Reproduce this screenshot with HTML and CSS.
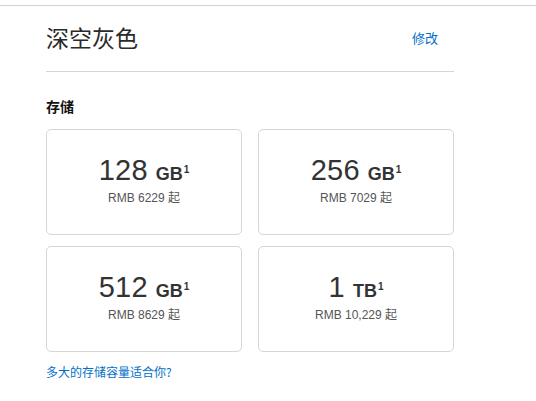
FILE: index.html
```html
<!DOCTYPE html>
<html lang="zh-CN">
<head>
<meta charset="utf-8">
<link rel="stylesheet" href="styles.css">
</head>
<body>
<div class="topbar"></div>
<main class="panel">
  <div class="color-row">
    <h1 class="color-name">深空灰色</h1>
    <a class="edit" href="#">修改</a>
  </div>
  <h2 class="section-title">存储</h2>
  <div class="grid">
    <div class="card">
      <div class="size"><span class="num">128</span><span class="unit">GB<sup>1</sup></span></div>
      <div class="price">RMB 6229 起</div>
    </div>
    <div class="card">
      <div class="size"><span class="num">256</span><span class="unit">GB<sup>1</sup></span></div>
      <div class="price">RMB 7029 起</div>
    </div>
    <div class="card">
      <div class="size"><span class="num">512</span><span class="unit">GB<sup>1</sup></span></div>
      <div class="price">RMB 8629 起</div>
    </div>
    <div class="card">
      <div class="size"><span class="num">1</span><span class="unit">TB<sup>1</sup></span></div>
      <div class="price">RMB 10,229 起</div>
    </div>
  </div>
  <a class="help" href="#">多大的存储容量适合你?</a>
</main>
</body>
</html>
```
FILE: styles.css
```css
* { box-sizing: border-box; }
html, body {
  margin: 0;
  padding: 0;
  background: #fff;
  font-family: "Liberation Sans", "Noto Sans CJK SC", sans-serif;
  color: #333;
}
.topbar {
  height: 6px;
  border-bottom: 1px solid #d2d2d2;
}
.panel {
  width: 408px;
  margin-left: 46px;
}
.color-row {
  display: flex;
  justify-content: space-between;
  align-items: center;
  height: 66px;
  padding-bottom: 3px;
  border-bottom: 1px solid #d6d6d6;
}
.color-name {
  margin: 0;
  font-size: 23px;
  font-weight: 400;
  color: #2a2a2a;
  font-family: "Noto Sans CJK SC", sans-serif;
  line-height: 1;
}
.edit {
  margin-right: 16px;
  font-size: 13px;
  color: #0070c9;
  text-decoration: none;
  font-family: "Noto Sans CJK SC", sans-serif;
  line-height: 1;
}
.section-title {
  margin: 25px 0 0;
  font-size: 14px;
  font-weight: 700;
  color: #111;
  line-height: 18px;
  font-family: "Noto Sans CJK SC", sans-serif;
}
.grid {
  margin-top: 14px;
  display: grid;
  grid-template-columns: 196px 196px;
  column-gap: 16px;
  row-gap: 11px;
}
.card {
  height: 106px;
  border: 1px solid #d6d6d6;
  border-radius: 5px;
  display: flex;
  flex-direction: column;
  align-items: center;
  justify-content: center;
  padding-bottom: 4px;
}
.size {
  display: flex;
  align-items: baseline;
  color: #333;
  line-height: 30px;
}
.num {
  font-size: 29px;
  font-weight: 400;
  letter-spacing: 0.2px;
}
.unit {
  margin-left: 8px;
  font-size: 18px;
  font-weight: 700;
}
.unit sup {
  font-size: 10px;
  font-weight: 700;
  vertical-align: 7px;
  line-height: 0;
  margin-left: 1px;
}
.price {
  margin-top: 2px;
  font-size: 12px;
  color: #555;
  line-height: 14px;
}
.help {
  display: block;
  margin-top: 12px;
  font-size: 12px;
  color: #0070c9;
  text-decoration: none;
  font-family: "Noto Sans CJK SC", sans-serif;
  line-height: 16px;
}
```
